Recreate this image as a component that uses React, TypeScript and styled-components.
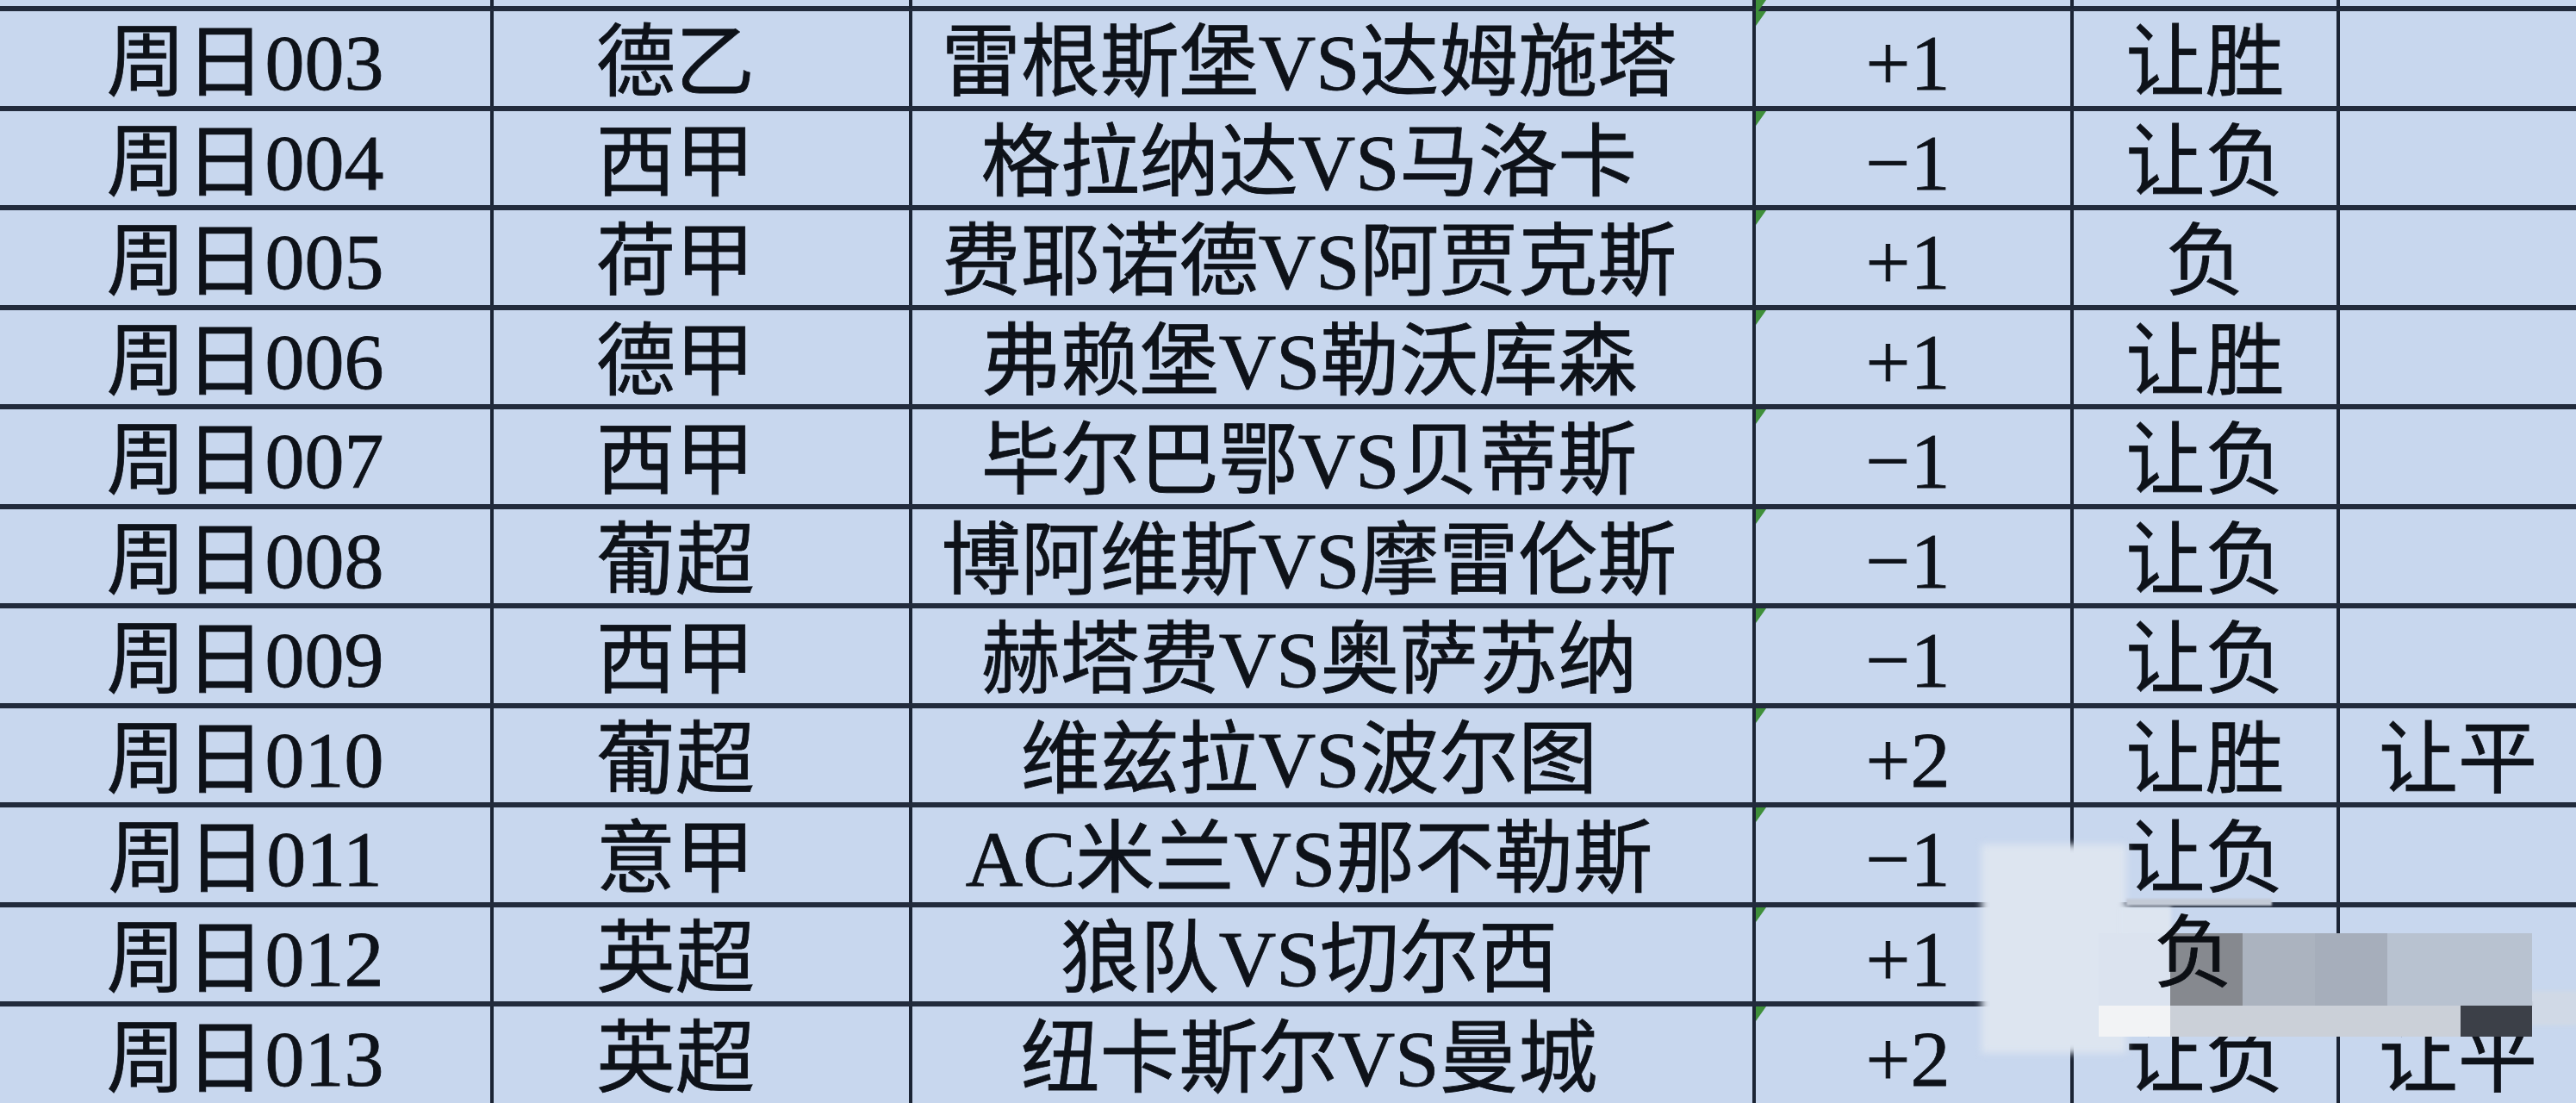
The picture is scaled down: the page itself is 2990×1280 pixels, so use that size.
import React from "react";
import styled, { createGlobalStyle } from "styled-components";

const Global = createGlobalStyle`
  html, body { margin: 0; padding: 0; background: #c8d7ee; overflow: hidden; }
  #root { width: 2990px; height: 1280px; }
`;

const Sheet = styled.div`
  position: relative;
  width: 2990px;
  height: 1280px;
  overflow: hidden;
  background: #c8d7ee;
  font-family: "Liberation Serif", "Noto Sans CJK SC", serif;
  color: #0e1219;
`;

const Row = styled.div<{ $h: number; $top: boolean }>`
  display: grid;
  grid-template-columns: 573px 486px 979px 369px 309px 1fr;
  height: ${(p) => p.$h}px;
  box-sizing: border-box;
  border-top: ${(p) => (p.$top ? "6px solid #222b3c" : "none")};
`;

const Cell = styled.div<{ $shift?: number; $last?: boolean }>`
  position: relative;
  display: flex;
  align-items: center;
  justify-content: center;
  box-sizing: border-box;
  border-right: ${(p) => (p.$last ? "none" : "4px solid #1b2434")};
  padding-right: ${(p) => p.$shift ?? 0}px;
  padding-top: 10px;
  font-size: 92px;
  line-height: 1;
  white-space: nowrap;
  -webkit-text-stroke: 0.8px #0e1219;
`;

const Flag = styled.span`
  position: absolute;
  left: 0;
  top: 0;
  width: 0;
  height: 0;
  border-top: 17px solid #3f8f3a;
  border-right: 12px solid transparent;
`;

const Overlay = styled.div`
  position: absolute;
  inset: 0;
  pointer-events: none;
`;

const Haze = styled.div<{ $x: number; $y: number; $w: number; $h: number; $c: string; $blur?: number }>`
  position: absolute;
  left: ${(p) => p.$x}px;
  top: ${(p) => p.$y}px;
  width: ${(p) => p.$w}px;
  height: ${(p) => p.$h}px;
  background: ${(p) => p.$c};
  filter: blur(${(p) => p.$blur ?? 0}px);
`;

const Mosaic = styled.div`
  position: absolute;
  left: 2436px;
  top: 1083px;
  display: grid;
  grid-template-columns: 83px 84px 84px 84px 85px 83px;
  grid-template-rows: 84px 36px;
`;

const Tile = styled.div<{ $c: string; $span?: number }>`
  background: ${(p) => p.$c};
  grid-column: span ${(p) => p.$span ?? 1};
`;

const Stray = styled.div`
  position: absolute;
  left: 2500px;
  top: 1052px;
  font-family: "Noto Sans CJK SC", sans-serif;
  font-size: 92px;
  line-height: 1;
  color: #0c0f14;
  -webkit-text-stroke: 0.8px #0c0f14;
`;

type R = [string, string, string, string, string, string];

const rows: R[] = [
  ["", "", "", "", "", ""],
  ["周日003", "德乙", "雷根斯堡VS达姆施塔", "+1", "让胜", ""],
  ["周日004", "西甲", "格拉纳达VS马洛卡", "−1", "让负", ""],
  ["周日005", "荷甲", "费耶诺德VS阿贾克斯", "+1", "负", ""],
  ["周日006", "德甲", "弗赖堡VS勒沃库森", "+1", "让胜", ""],
  ["周日007", "西甲", "毕尔巴鄂VS贝蒂斯", "−1", "让负", ""],
  ["周日008", "葡超", "博阿维斯VS摩雷伦斯", "−1", "让负", ""],
  ["周日009", "西甲", "赫塔费VS奥萨苏纳", "−1", "让负", ""],
  ["周日010", "葡超", "维兹拉VS波尔图", "+2", "让胜", "让平"],
  ["周日011", "意甲", "AC米兰VS那不勒斯", "−1", "让负", ""],
  ["周日012", "英超", "狼队VS切尔西", "+1", "", ""],
  ["周日013", "英超", "纽卡斯尔VS曼城", "+2", "让负", "让平"],
];

const shifts = [0, 60, 54, 12, 0, 0];

const edge = (i: number) => (i === 0 ? 0 : Math.round(7 + (i - 1) * 115.5));

export default function App() {
  return (
    <>
      <Global />
      <Sheet>
        {rows.map((r, i) => {
          const h = i === 0 ? 7 : i === rows.length - 1 ? 1280 - edge(i) : edge(i + 1) - edge(i);
          return (
            <Row key={i} $h={h} $top={i > 0}>
              {r.map((t, j) => (
                <Cell key={j} $shift={shifts[j]} $last={j === 5}>
                  {j === 3 && <Flag />}
                  {t}
                </Cell>
              ))}
            </Row>
          );
        })}
        <Overlay>
          <Haze $x={2300} $y={980} $w={168} $h={242} $c="#dde5f0" $blur={4} />
          <Haze $x={2460} $y={1052} $w={60} $h={34} $c="#dde5f0" $blur={2} />
          <Haze $x={2468} $y={1043} $w={169} $h={8} $c="#c3cad6" $blur={1} />
          <Haze $x={2936} $y={1150} $w={60} $h={40} $c="#d0d9e6" $blur={2} />
          <Mosaic>
            <Tile $c="#dbe3ef" />
            <Tile $c="#86898f" />
            <Tile $c="#abb3bf" />
            <Tile $c="#a6aebb" />
            <Tile $c="#b8c2d0" $span={2} />
            <Tile $c="#f2f3f5" />
            <Tile $c="#cbd0d8" $span={4} />
            <Tile $c="#3c4048" />
          </Mosaic>
          <Stray>负</Stray>
        </Overlay>
      </Sheet>
    </>
  );
}
